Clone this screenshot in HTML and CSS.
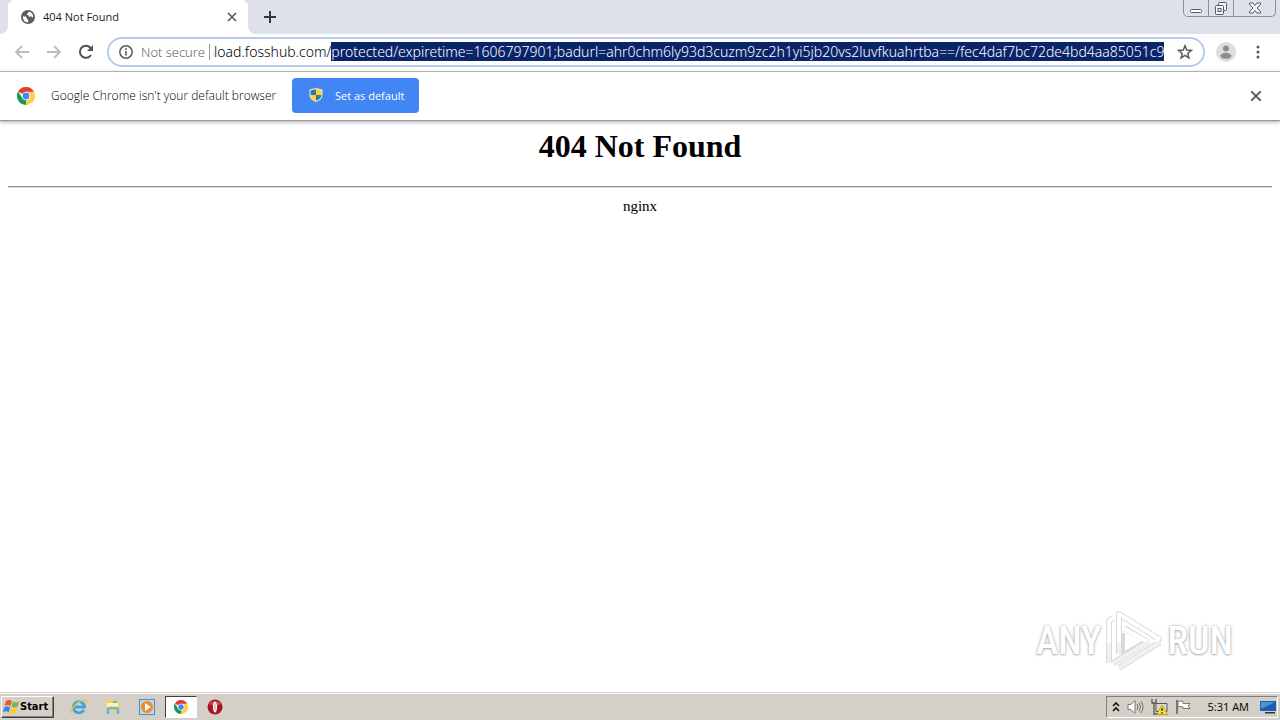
FILE: index.html
```
<!DOCTYPE html>
<html lang="en">
<head>
<meta charset="utf-8">
<title>404 Not Found</title>
<link rel="stylesheet" href="styles.css">
</head>
<body class="desktop">
<svg class="defs" aria-hidden="true">
  <symbol id="chrome" viewBox="0 0 18 18">
    <path fill="#e33b2e" d="M9 9 1.2 4.5A9 9 0 0 1 16.8 4.5z"/>
    <path fill="#fcd04b" d="M9 9V4.7h7.9A9 9 0 0 1 9 18z"/>
    <path fill="#179c52" d="M9 9 9.2 18A9 9 0 0 1 1.2 4.5L5.3 11z"/>
    <path fill="#fcd04b" d="M12.8 11 9 18h-.4l2.5-6z"/>
    <circle cx="9" cy="9" r="4.3" fill="#fff"/><circle cx="9" cy="9" r="3.4" fill="#4285f4"/>
  </symbol>
</svg>
<header class="tabstrip">
  <div class="tab-edge"></div>
  <div class="tab">
    <svg class="tab-icon" width="14" height="14" viewBox="0 0 14 14"><circle cx="7" cy="7" r="7" fill="#5a5e63"/><path fill="#fff" d="M2 6.2c1.6.2 3 .2 3.6 1.2.5 1-.2 1.4.9 1.9 1 .5.7 1.5.4 2.9C4 12.500 1.400 9.600 2 6.200zM7.200 1.700c-.2 1 .2 1.300-.8 2-.9.5-.9 1 .1 1.200 1.400.2 1.500 1 1.400 1.600.9.500 1.700-.4 2.600.1 1 .5 1.100 1 1.500 1.400C12.900 4.600 10.500 1.700 7.200 1.700z"/></svg>
    <span class="tab-title">404 Not Found</span>
    <button class="plain tab-close" aria-label="Close tab"><svg width="10" height="10" viewBox="0 0 10 10"><path d="M1 1l8 8M9 1L1 9" stroke="#5a5e63" stroke-width="1.700"/></svg></button>
  </div>
  <div class="strip-rest">
    <button class="plain newtab" aria-label="New tab"><svg width="12" height="12" viewBox="0 0 12 12"><path d="M6 0v12M0 6h12" stroke="#33373b" stroke-width="2"/></svg></button>
    <div class="winctl">
      <button class="plain wbtn" aria-label="Minimize"><svg width="14" height="13" viewBox="0 0 14 13"><rect x="1.500" y="7.500" width="11" height="3" rx="1" fill="#fff" stroke="#555965"/></svg></button>
      <button class="plain wbtn" aria-label="Restore"><svg width="14" height="13" viewBox="0 0 14 13"><g fill="#f4f5f7" stroke="#555965"><rect x="4.500" y=".5" width="8" height="8" rx="1"/><rect x="1.500" y="3.500" width="8" height="9" rx="1"/><rect x="4" y="6.500" width="3" height="3"/></g></svg></button>
      <button class="plain wbtn wide" aria-label="Close window"><svg width="14" height="12" viewBox="0 0 14 12"><path fill="#f4f5f7" stroke="#555965" d="M1.500 1h3.500l2 2.500L9 1h3.500v1.500L9 6l3.500 3.500V11H9L7 8.500 5 11H1.500V9.500L5 6 1.500 2.500z"/></svg></button>
    </div>
  </div>
</header>
<nav class="toolbar">
  <button class="plain tool" aria-label="Back"><svg width="16" height="14" viewBox="0 0 16 14"><path d="M15 7H2M8 1L2 7l6 6" fill="none" stroke="#b9bbbe" stroke-width="1.800"/></svg></button>
  <button class="plain tool" aria-label="Forward"><svg width="16" height="14" viewBox="0 0 16 14"><path d="M1 7h13M8 1l6 6-6 6" fill="none" stroke="#b9bbbe" stroke-width="1.800"/></svg></button>
  <button class="plain tool" aria-label="Reload"><svg width="16" height="16" viewBox="0 0 16 16"><path d="M13 11A6 6 0 1 1 12.300 3.700L14 5.500" fill="none" stroke="#505459" stroke-width="2"/><path d="M15 1v6H9z" fill="#505459"/></svg></button>
  <div class="omnibox">
    <svg class="info" width="14" height="14" viewBox="0 0 14 14"><circle cx="7" cy="7" r="6.200" fill="none" stroke="#55595e" stroke-width="1.500"/><path d="M7 6v4.500M7 3.300v1.700" stroke="#55595e" stroke-width="1.600"/></svg>
    <label class="secure" for="url">Not secure</label>
    <input class="url" id="url" type="text" spellcheck="false" value="download.fosshub.com/protected/expiretime=1606797901;badurl=ahr0chm6ly93d3cuzm9zc2h1yi5jb20vs2luvfkuahrtba==/fec4daf7bc72de4bd4aa85051c9">
    <button class="plain star" aria-label="Bookmark this page"><svg width="16" height="16" viewBox="0 0 16 16"><path d="M8 1.800l1.700 4.300 4.600.3-3.500 3 1.100 4.500L8 11.400l-3.900 2.500 1.100-4.500-3.500-3 4.600-.3z" fill="none" stroke="#55595e" stroke-width="1.500"/></svg></button>
  </div>
  <button class="plain profile" aria-label="Profile"><svg width="20" height="20" viewBox="0 0 20 20"><circle cx="10" cy="10" r="10" fill="#dedede"/><circle cx="10" cy="6.500" r="3" fill="#8b8d90"/><ellipse cx="10" cy="13.800" rx="5.500" ry="3" fill="#8b8d90"/></svg></button>
  <button class="plain menu" aria-label="Menu"><svg width="4" height="14" viewBox="0 0 4 14"><g fill="#55595e"><circle cx="2" cy="2" r="1.500"/><circle cx="2" cy="7" r="1.500"/><circle cx="2" cy="12" r="1.500"/></g></svg></button>
</nav>
<section class="infobar">
  <svg width="18" height="18"><use href="#chrome"/></svg>
  <span class="info-text">Google Chrome isn't your default browser</span>
  <button class="default-btn"><svg class="shield" width="14" height="14" viewBox="0 0 14 14"><path d="M7 0l6.500 1.500V7c0 3.500-2.500 5.500-6.500 7C3 12.500.5 10.500.5 7V1.500z" fill="#e9e4cf"/><path d="M7 1.200V7H1.600V2.400z" fill="#2f78b7"/><path d="M7 1.200V7h5.400V2.400z" fill="#ffd51f"/><path d="M7 7v5.800C3.500 11.500 1.600 10 1.600 7z" fill="#ffd51f"/><path d="M7 7v5.800c3.500-1.300 5.400-2.800 5.400-5.800z" fill="#2f78b7"/></svg>Set as default</button>
  <button class="plain info-close" aria-label="Dismiss"><svg width="10" height="10" viewBox="0 0 10 10"><path d="M0 0l10 10M10 0L0 10" stroke="#606469" stroke-width="2"/></svg></button>
</section>
<main class="page">
  <h1 class="heading">404 Not Found</h1>
  <hr class="rule">
  <p class="server">nginx</p>
  <div class="watermark"><span>ANY</span><svg class="play" width="58" height="62" viewBox="0 0 58 62" fill="none" stroke-linejoin="round"><g stroke="#d9d9d9" stroke-width="6"><path d="M4 53V11l4-3M14 44V4l40 25-4 3M19 23v21l22-13-22-13M8 53l36-22M14 58l41-26"/></g><path d="M20 22v19l17-10z" fill="#fff"/><g stroke="#fff" stroke-width="4"><path d="M4 33V11l4-3M14 33V4l40 25-4 3M18 18l25 14"/></g><g stroke="#f1f1f1" stroke-width="4"><path d="M4 53V33M14 44V33M8 53l37-22M14 58l41-26"/></g></svg><span>RUN</span></div>
</main>
<footer class="taskbar">
  <button class="start"><svg width="17" height="16" viewBox="0 0 17 16"><path fill="#ef5a25" d="M3 2c2-1.500 4-1.500 6 0L7.500 7c-2-1.200-4-1.200-6 .2z"/><path fill="#76b83f" d="M10 2.500c2 1.300 4 1.300 6 0l-1.500 5c-2 1.200-4 1.200-6 0z"/><path fill="#3b88d6" d="M1.200 8.400c2-1.400 4-1.400 6-.1l-1.500 5c-2-1.300-4-1.300-6 0z"/><path fill="#fdc92e" d="M8.200 8.800c2 1.300 4 1.300 6 0l-1.500 5c-2 1.300-4 1.300-6 0z"/></svg>Start</button>
  <button class="plain task" aria-label="Internet Explorer"><svg width="18" height="18" viewBox="0 0 18 18"><path d="M13.800 12A5.600 5.600 0 1 1 14.500 9H4.500" fill="none" stroke="#3ba3df" stroke-width="2.800"/><path d="M2 15.500C-1 12 9 1.500 15.500 1.800c2 .2 1.700 2.500.5 4.700" fill="none" stroke="#efc33c" stroke-width="1.500"/></svg></button>
  <button class="plain task" aria-label="Explorer"><svg width="18" height="18" viewBox="0 0 18 18"><path fill="#f0d072" d="M2 2h6l1 2h7v10H2z"/><path fill="#fff2b5" d="M3 5h11v4H3z"/><path fill="#73c26b" d="M9 3h4v2H9z"/><path d="M4 16v-4q0-2 2-2h6q2 0 2 2v4" fill="none" stroke="#69b7df" stroke-width="2.500"/></svg></button>
  <button class="plain task" aria-label="Media Player"><svg width="18" height="18" viewBox="0 0 18 18"><rect x="1.500" y="1.500" width="15" height="15" fill="#b8d9ef" stroke="#4a91c5"/><circle cx="9" cy="9" r="6" fill="#f28a1e"/><path d="M7 5l6 4-6 4z" fill="#fff"/></svg></button>
  <button class="plain task active" aria-label="Chrome"><svg width="14" height="14"><use href="#chrome"/></svg></button>
  <button class="plain task" aria-label="Opera"><svg width="16" height="16" viewBox="0 0 16 16"><circle cx="8" cy="8" r="7.500" fill="#a81420"/><path d="M2 5a7 6 0 0 1 12 0q-6 3-12 0" fill="#cc4a55"/><ellipse cx="8" cy="8" rx="2" ry="5.500" fill="#fff"/><ellipse cx="8" cy="8" rx=".5" ry="4" fill="#c8848a"/></svg></button>
  <div class="tray">
    <svg width="8" height="10" viewBox="0 0 8 10"><path d="M1 4l3-3 3 3M1 9l3-3 3 3" fill="none" stroke="#111" stroke-width="1.600"/></svg>
    <svg width="17" height="16" viewBox="0 0 17 16"><path d="M1 5.500h3l4-4v13l-4-4H1z" fill="#fff" stroke="#777"/><path d="M10 5q2 3 0 6M12 3.500q3 4.500 0 9M14 2q4 6 0 12" fill="none" stroke="#777"/></svg>
    <svg width="17" height="16" viewBox="0 0 17 16"><path d="M5 4.500h11v8H5z" fill="#d8d8d0" stroke="#555"/><path d="M1 0v4h4V0M3 4v11h8" fill="none" stroke="#555" stroke-width="1.300"/><path d="M11 6l5.500 9.500h-11z" fill="#ffdc2e" stroke="#b08c00" stroke-width=".7"/><path d="M11 9v3M11 13v1.500" stroke="#222" stroke-width="1.300"/></svg>
    <svg width="17" height="16" viewBox="0 0 17 16"><path d="M2 1v14" stroke="#777" stroke-width="2"/><path d="M3 2.500q3-1 5 0v2h7l-2 2.500 2 2.500H8V8q-2-1-5 0z" fill="#fff" stroke="#777"/></svg>
    <time class="clock">5:31 AM</time>
    <svg width="16" height="14" viewBox="0 0 16 14"><path d="M0 1h16v10H0z" fill="#1d5fae"/><path d="M1 2h14L1 9z" fill="#4f94d8"/><path d="M5 12h10v1.500H5z" fill="#333"/></svg>
  </div>
</footer>
<script src="script.js"></script>
</body>
</html>
```
FILE: styles.css
```
* { box-sizing: border-box; }
.desktop {
  margin: 0; min-height: 100vh; display: flex; flex-direction: column;
  background: #fff; color: #222; font-family: "Open Sans", "Noto Sans", sans-serif;
}
.defs { display: none; }
.plain { border: 0; padding: 0; background: none; display: flex; align-items: center; justify-content: center; }
.tabstrip { display: flex; height: 34px; background: #fff; }
.tab-edge { width: 8px; background: #dee1e8; border-radius: 0 0 8px 0; }
.tab {
  width: 240px; padding: 0 11px 0 13px; display: flex; align-items: center; font-size: 11px;
  background:
    radial-gradient(circle at 8px 8px, #fff 8px, transparent 9px) 0 0 / 8px 8px no-repeat,
    radial-gradient(circle at 0 8px, #fff 8px, transparent 9px) 100% 0 / 8px 8px no-repeat,
    linear-gradient(#fff, #fff) center / calc(100% - 16px) 100% no-repeat,
    linear-gradient(#fff, #fff) 0 8px / 100% 100% no-repeat,
    #dee1e8;
}
.tab-title { margin-left: 8px; flex: 1; line-height: 14px; }
.strip-rest { flex: 1; display: flex; background: #dee1e8; border-radius: 0 0 0 8px; }
.newtab { width: 44px; }
.winctl {
  display: flex; margin-left: auto; margin-right: 4px; height: 17px; width: 93px;
  border: 1px solid #8b8f99; border-top: 0; border-radius: 0 0 5px 5px;
}
.wbtn { width: 25px; border-right: 1px solid #8b8f99; }
.wide { flex: 1; border-right: 0; }
.toolbar { display: flex; align-items: center; height: 38px; padding: 0 12px 2px 6px; border-bottom: 1px solid #b4b5b8; }
.tool { width: 32px; height: 32px; }
.omnibox {
  flex: 1; display: flex; align-items: center; height: 30px; margin-left: 5px; padding: 0 8px 0 10px;
  border: 2px solid #b7caee; border-radius: 15px; min-width: 0;
}
.secure {
  margin: 0 3px 0 8px; padding-right: 4px; border-right: 1px solid #999;
  font-size: 13px; font-weight: 300; line-height: 16px; color: #4c5055; white-space: nowrap;
}
.url {
  flex: 1; min-width: 0; height: 20px; border: 0; padding: 0; outline: 0; background: #fff;
  font: 300 14px "Noto Sans", "Open Sans", sans-serif; color: #000;
}
.url::selection { background: #0a246a; color: #fff; }
.star { width: 20px; margin-left: 11px; }
.profile { margin-left: 11px; }
.menu { width: 20px; margin-left: 12px; }
.infobar {
  display: flex; align-items: center; height: 49px; padding: 0 19px 0 17px;
  border-bottom: 1px solid #999; box-shadow: 0 1px 4px #aaa; font-size: 12px;
}
.info-text { margin-left: 16px; width: 228px; white-space: nowrap; font-weight: 300; color: #000; line-height: 16px; }
.default-btn {
  display: flex; align-items: center; gap: 12px; height: 35px; width: 127px; margin: 0 0 2px 13px; padding: 0 0 0 17px;
  border: 0; border-radius: 4px; background: #4285f4; color: #fff;
  font: 11px "Open Sans", "Noto Sans", sans-serif; white-space: nowrap;
}
.shield { flex: none; }
.info-close { margin-left: auto; }
.page { flex: 1; position: relative; padding: 0 8px; font-family: "Liberation Serif", serif; color: #000; text-align: center; }
.heading { margin: 7px 0 22px; font-size: 32px; line-height: 36px; }
.rule { margin: 0; border: 0; border-top: 1px solid #8f8f8f; border-bottom: 1px solid #ddd; }
.server { margin: 9px 0; font-size: 15px; line-height: 18px; }
.watermark {
  position: absolute; right: 47px; bottom: 20px; display: flex; align-items: center; gap: 4px;
  font: 500 38px "Roboto Condensed", "Liberation Sans Narrow", sans-serif;
  color: #fff; text-shadow: 0 0 3px #aaa, 0 1px 2px #bbb;
}
.taskbar {
  display: flex; align-items: center; height: 28px; padding: 2px 2px 2px 1px; background: #d4d0c8;
  border-top: 1px solid #d4d0c8; box-shadow: inset 0 1px #fff;
}
.start {
  display: flex; align-items: center; width: 53px; height: 22px; padding: 0 1px; margin-right: 8px;
  border: 1px solid; border-color: #fff #404040 #404040 #fff; box-shadow: inset -1px -1px #808080;
  background: #d4d0c8; color: #000; font: bold 11px "DejaVu Sans Condensed", "Noto Sans", sans-serif;
}
.task { width: 34px; height: 22px; }
.active { width: 32px; margin: 0 1px; background: #fff; border: 1px solid; border-color: #404040 #fff #fff #404040; }
.tray {
  display: flex; align-items: center; gap: 7px; margin-left: auto; height: 22px; padding: 0 1px 0 5px;
  border: 1px solid; border-color: #808080 #fff #fff #808080; color: #000;
}
.clock { margin: 0 4px 0 9px; font-size: 11px; }
```
FILE: script.js
```
const url = document.getElementById("url");
url.focus();
url.setSelectionRange(url.value.indexOf("/") + 1, url.value.length);
url.scrollLeft = url.scrollWidth;
```
